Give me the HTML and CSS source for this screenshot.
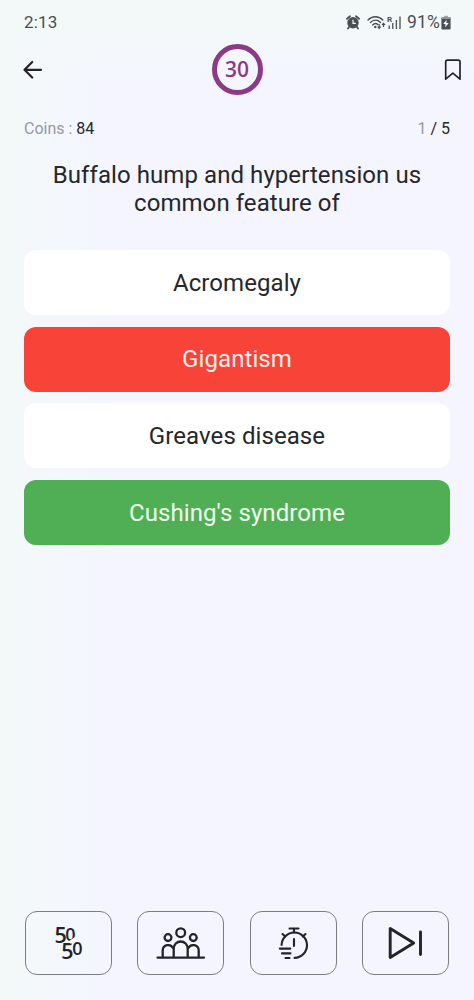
FILE: index.html
```html
<!DOCTYPE html>
<html lang="en">
<head>
<meta charset="utf-8">
<meta name="viewport" content="width=device-width, initial-scale=1">
<title>Quiz</title>
<link rel="stylesheet" href="styles.css">
</head>
<body>
<main class="screen">
  <div class="status-bar">
    <span class="clock">2:13</span>
    <div class="status-right">
      <svg class="alarm" width="14" height="15" viewBox="0 0 14 15">
        <path d="M1 3.800 4 1.300M13 3.800 10 1.300M3 12l-1 1.500M11 12l1 1.500" stroke="#4a4f52" stroke-width="1.800" stroke-linecap="round"/>
        <circle cx="7" cy="7.700" r="5.700" fill="#4a4f52"/>
        <path d="M7 4.700v3.600h2.800" fill="none" stroke="#f3f8f9" stroke-width="1.200"/>
      </svg>
      <svg class="wifi" width="19" height="15" viewBox="0 0 19 15">
        <g fill="none" stroke="#4a4f52" stroke-width="1.400" stroke-linecap="round">
          <path d="M1 5C5 .6 11.800 .6 15.800 5M3.300 7.600c2.900-3.200 7.400-3.200 10.200-.2M5.700 10c1.600-1.700 3.700-1.700 5.200-.4"/>
        </g>
        <circle cx="8.300" cy="12" r="1.200" fill="#4a4f52"/>
        <path d="M12.200 9v4M10.700 11.700l1.500 1.600 1.500-1.600M16.500 12V8.400M15 9.900l1.500-1.600L18 9.900" fill="none" stroke="#4a4f52" stroke-width="1.200"/>
      </svg>
      <svg class="signal" width="15" height="15" viewBox="0 0 15 15">
        <text class="roaming" x="0" y="6.500">R</text>
        <path d="M2.200 10.500V14M5.800 8V14M9.400 5V14M13 1.500V14" stroke="#4a4f52" stroke-width="1.300"/>
      </svg>
      <span class="percent">91%</span>
      <svg class="battery" width="10" height="15" viewBox="0 0 10 15">
        <path d="M3 .8h4v1.700H3z" fill="#a5a9aa"/>
        <rect x=".4" y="2" width="9.200" height="12.500" rx="1.200" fill="#4a4f52"/>
        <path d="M.6 2.200h8.800v1.600H.6z" fill="#a5a9aa"/>
        <path d="M5.700 4.800 2.200 9h2.300l-.4 3.300L7.800 8H5.400z" fill="#fff"/>
      </svg>
    </div>
  </div>

  <header class="toolbar">
    <svg width="20" height="20" viewBox="0 0 20 20" class="back">
      <path d="M9.200 2 1.500 9.800l7.700 7.700M1.500 9.800H18" fill="none" stroke="#222428" stroke-width="2.200" stroke-linecap="round" stroke-linejoin="round"/>
    </svg>
    <div class="timer">30</div>
    <svg width="18" height="22" viewBox="0 0 18 22" class="bookmark">
      <path d="M1.700 20.200V3q0-1.800 1.800-1.800h10.700Q16 1.200 16 3v17.200l-7.150-6z" fill="none" stroke="#222428" stroke-width="1.700" stroke-linejoin="round"/>
    </svg>
  </header>

  <div class="stats">
    <div class="coins">Coins : <b>84</b></div>
    <div class="progress">1 <b>/ 5</b></div>
  </div>

  <h1 class="question">Buffalo hump and hypertension us<br>common feature of</h1>

  <div class="answers">
    <div class="answer">Acromegaly</div>
    <div class="answer wrong">Gigantism</div>
    <div class="answer">Greaves disease</div>
    <div class="answer correct">Cushing's syndrome</div>
  </div>

  <footer class="lifelines">
    <div class="lifeline">
      <svg width="86" height="62" viewBox="0 0 86 62">
        <text class="fifty"><tspan x="28.500" y="31.300">5</tspan><tspan class="zero" x="39.300" y="29">0</tspan><tspan x="35.200" y="46.500">5</tspan><tspan class="zero" x="46.300" y="42.600">0</tspan></text>
        <path d="M43.500 30.500 51.500 25" stroke="#f4f7fc" stroke-width="2.800"/>
      </svg>
    </div>
    <div class="lifeline">
      <svg width="86" height="62" viewBox="0 0 86 62">
        <g class="line">
          <path d="M19.500 45.600H66"/>
          <circle cx="42.700" cy="20.700" r="4.400"/>
          <circle cx="30" cy="25.600" r="3.400"/>
          <circle cx="55.300" cy="25.600" r="3.400"/>
          <path d="M35.700 45V36.500a7 7 0 0 1 14 0V45M24.700 45v-6.500a5.500 5.500 0 0 1 10.500-2.200M60.700 45v-6.500a5.500 5.500 0 0 0-10.500-2.200"/>
        </g>
      </svg>
    </div>
    <div class="lifeline">
      <svg width="86" height="62" viewBox="0 0 86 62">
        <g class="line thin">
          <path d="M38.500 16.500h9M43 16.500v4M31.500 22l2.700 2.500M54.500 22l-2.700 2.500M43 27v7M28.800 36.600h10.500M31 41.400h8.500M34.500 46h4"/>
          <path d="M30.600 33a12.700 12.700 0 1 1 13 12.900"/>
        </g>
      </svg>
    </div>
    <div class="lifeline">
      <svg width="86" height="62" viewBox="0 0 86 62">
        <g class="line bold">
          <path d="M27.200 16.500v29l23.500-14.500zM57.500 20v22.500"/>
        </g>
      </svg>
    </div>
  </footer>
</main>
</body>
</html>
```
FILE: styles.css
```css
* { box-sizing: border-box; }
body { margin: 0; font-family: Roboto, sans-serif; color: #25272b; }
.screen {
  width: 474px;
  height: 1000px;
  display: flex;
  flex-direction: column;
  background:
    linear-gradient(to bottom, #f3f8f9 35px, rgba(243, 248, 249, 0) 85px),
    linear-gradient(to right, #f3f8f9 20px, #f4f6fe 90px, #f4f5ff 240px);
}
.status-bar {
  height: 44px;
  padding: 0 23px 0 24px;
  display: flex;
  align-items: center;
  justify-content: space-between;
  color: #4a4f52;
}
.clock { font-size: 17px; letter-spacing: .2px; }
.status-right { display: flex; align-items: center; }
.wifi { margin-left: 6px; }
.signal { margin-left: 1px; }
.roaming { font: bold 8px Roboto, sans-serif; fill: #4a4f52; }
.percent { font-size: 17.500px; margin-left: 5px; letter-spacing: .2px; }
.alarm { margin-right: 1px; }
.battery { margin-left: 1px; }
.toolbar {
  height: 51px;
  padding: 0 12px 0 23px;
  display: grid;
  grid-template-columns: 188.500px 51px 1fr;
  align-items: center;
}
.bookmark { justify-self: end; }
.timer {
  width: 51px;
  height: 51px;
  border: 5px solid #8b3a86;
  border-radius: 50%;
  display: grid;
  place-items: center;
  font: 600 21px/1 "Open Sans", sans-serif;
  color: #8b3a86;
}
.stats {
  margin-top: 24px;
  padding: 0 24px;
  height: 20px;
  line-height: 20px;
  display: flex;
  justify-content: space-between;
  font-size: 16px;
  color: #96999f;
}
.stats b { font-weight: 400; color: #25272b; }
.question {
  margin: 22px 0 0;
  font-size: 24px;
  line-height: 28px;
  font-weight: 400;
  letter-spacing: .07px;
  text-align: center;
}
.answers {
  margin-top: 33px;
  padding: 0 24px;
  display: grid;
  grid-auto-rows: 65px;
  row-gap: 11.700px;
}
.answer {
  display: grid;
  place-items: center;
  border-radius: 12px;
  background: #fff;
  font-size: 24px;
  letter-spacing: .08px;
}
.wrong { background: #f84438; color: #fff0ed; }
.correct { background: #50af54; color: #f1fff1; }
.lifelines {
  margin-top: auto;
  padding: 0 25px 25px;
  display: flex;
  justify-content: space-between;
}
.lifeline {
  width: 87px;
  height: 64px;
  border: 1px solid #7b7d82;
  border-radius: 12px;
}
.lifeline svg { display: block; }
.line { fill: none; stroke: #222428; stroke-width: 2.300; stroke-linecap: round; stroke-linejoin: round; }
.thin { stroke-width: 2.100; }
.bold { stroke-width: 2.900; }
.fifty { font: 600 21.500px "Open Sans", sans-serif; fill: #222428; }
.zero { font-size: 18px; }
```
